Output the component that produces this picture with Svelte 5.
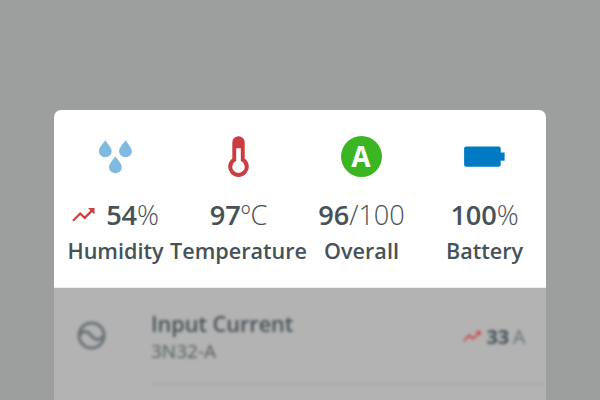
<script>
  const metrics = [
    { icon: 'drops', value: '54', unit: '%', label: 'Humidity', trend: true },
    { icon: 'thermometer', value: '97', unit: 'ºC', label: 'Temperature' },
    { icon: 'grade', value: '96', unit: '/100', label: 'Overall' },
    { icon: 'battery', value: '100', unit: '%', label: 'Battery' }
  ];
</script>

{#snippet trendIcon(w)}
  <svg class="trend" width={w} height={w * 14 / 23} viewBox="0 0 23 14">
    <path d="M1 12.7 8.2 5.5 12.7 9.9 20 2.6" fill="none" stroke="#cf3e40" stroke-width="2.2" />
    <path d="M16 0H22.5V6.5Z" fill="#cf3e40" />
  </svg>
{/snippet}

<div class="screen">
  <section class="summary">
    {#each metrics as m}
      <div class="metric">
        <div class="icon">
          {#if m.icon === 'drops'}
            <svg width="42" height="42" viewBox="-0.5 0 42 42" fill="#80bae0">
              <path d="M10.8 4.2C12.7 7.3 17.2 11.4 17.2 15.2A6.4 6 0 0 1 4.4 15.2C4.4 11.4 8.9 7.3 10.8 4.2Z" />
              <path d="M31 4.2C32.9 7.3 37.4 11.4 37.4 15.2A6.4 6 0 0 1 24.6 15.2C24.6 11.4 29.1 7.3 31 4.2Z" />
              <path d="M20.9 20.3C22.8 23.4 27.3 27.5 27.3 31.3A6.4 6 0 0 1 14.5 31.3C14.5 27.5 19 23.4 20.9 20.3Z" />
            </svg>
          {:else if m.icon === 'thermometer'}
            <svg width="42" height="42" viewBox="-0.5 0 42 42">
              <path fill="#cc3d41" fill-rule="evenodd" d="M14.8 6.4a6.2 6.2 0 0 1 12.4 0V22.4a10.3 10.3 0 1 1-12.4 0ZM18.7 12.3V25.1a6.2 6.2 0 1 0 4.6 0V12.3Z" />
            </svg>
          {:else if m.icon === 'grade'}
            <div class="grade">A</div>
          {:else}
            <svg width="42" height="42" viewBox="-0.5 0 42 42" fill="#007ac2">
              <rect x="0.6" y="10.4" width="36.6" height="20.4" rx="2" />
              <rect x="36" y="16.5" width="5.1" height="8.2" />
            </svg>
          {/if}
        </div>
        <div class="value">
          {#if m.trend}{@render trendIcon(23)}{/if}
          <span><b>{m.value}</b>{m.unit}</span>
        </div>
        <div class="label">{m.label}</div>
      </div>
    {/each}
  </section>
  <section class="list">
    <div class="row">
      <svg class="wave" width="30" height="30" viewBox="0 0 30 30" fill="none" stroke="#697277" stroke-width="3">
        <circle cx="15.6" cy="15.5" r="12.5" />
        <path d="M3.6 15.5C6.6 10.3 11.1 10.3 15.1 15.5S24.1 20.7 27.6 15.5" />
      </svg>
      <div class="body">
        <div class="names">
          <div class="title">Input Current</div>
          <div class="sub">3N32-A</div>
        </div>
        <div class="reading">
          {@render trendIcon(18)}
          <b>33</b><span>A</span>
        </div>
      </div>
    </div>
  </section>
</div>

<style>
  :global(body) { background: #9d9f9e; }
  .screen {
    box-sizing: border-box;
    width: 600px;
    height: 400px;
    overflow: hidden;
    padding: 110px 54px 0;
    background: #9d9f9e;
    font-family: "Open Sans", "Noto Sans", sans-serif;
    color: #465257;
    white-space: nowrap;
  }
  .summary {
    box-sizing: border-box;
    display: flex;
    height: 178px;
    padding-top: 26px;
    background: #fff;
    border-radius: 7px 7px 0 0;
    border-bottom: 1px solid #eee;
  }
  .metric {
    width: 123px;
    display: flex;
    flex-direction: column;
    align-items: center;
  }
  .icon, .icon svg { display: block; height: 42px; }
  .icon { margin-right: 1px; }
  .grade {
    box-sizing: border-box;
    width: 41px;
    height: 41px;
    border-radius: 50%;
    background: #3bb521;
    color: #fff;
    font-size: 28px;
    font-weight: 700;
    line-height: 41px;
    text-align: center;
  }
  .value {
    display: flex;
    align-items: center;
    gap: 11px;
    height: 38px;
    margin-top: 18px;
    font-size: 27.2px;
    line-height: 38px;
    font-weight: 300;
    letter-spacing: -0.1px;
  }
  .value b { font-weight: 600; }
  .label {
    margin-top: 2px;
    font-size: 21.6px;
    line-height: 30px;
    font-weight: 600;
  }
  .list { height: 112px; background: #b3b3b3; }
  .row { display: flex; padding-left: 22px; filter: blur(1.4px); }
  .wave { margin-top: 32px; }
  .body {
    box-sizing: border-box;
    display: flex;
    justify-content: space-between;
    flex: 1;
    height: 97px;
    margin-left: 45px;
    padding-right: 20.5px;
    border-bottom: 2px solid #a9aaaa;
  }
  .names { padding-top: 21px; }
  .title { font-size: 21.6px; line-height: 30px; font-weight: 600; }
  .sub { font-size: 19px; line-height: 24px; color: #545d61; }
  .reading {
    display: flex;
    align-items: center;
    height: 30px;
    margin-top: 33px;
    font-size: 20px;
  }
  .reading b { margin: 0 4px 0 6px; font-weight: 700; letter-spacing: -0.3px; }
  .reading span { color: #697277; }
</style>
